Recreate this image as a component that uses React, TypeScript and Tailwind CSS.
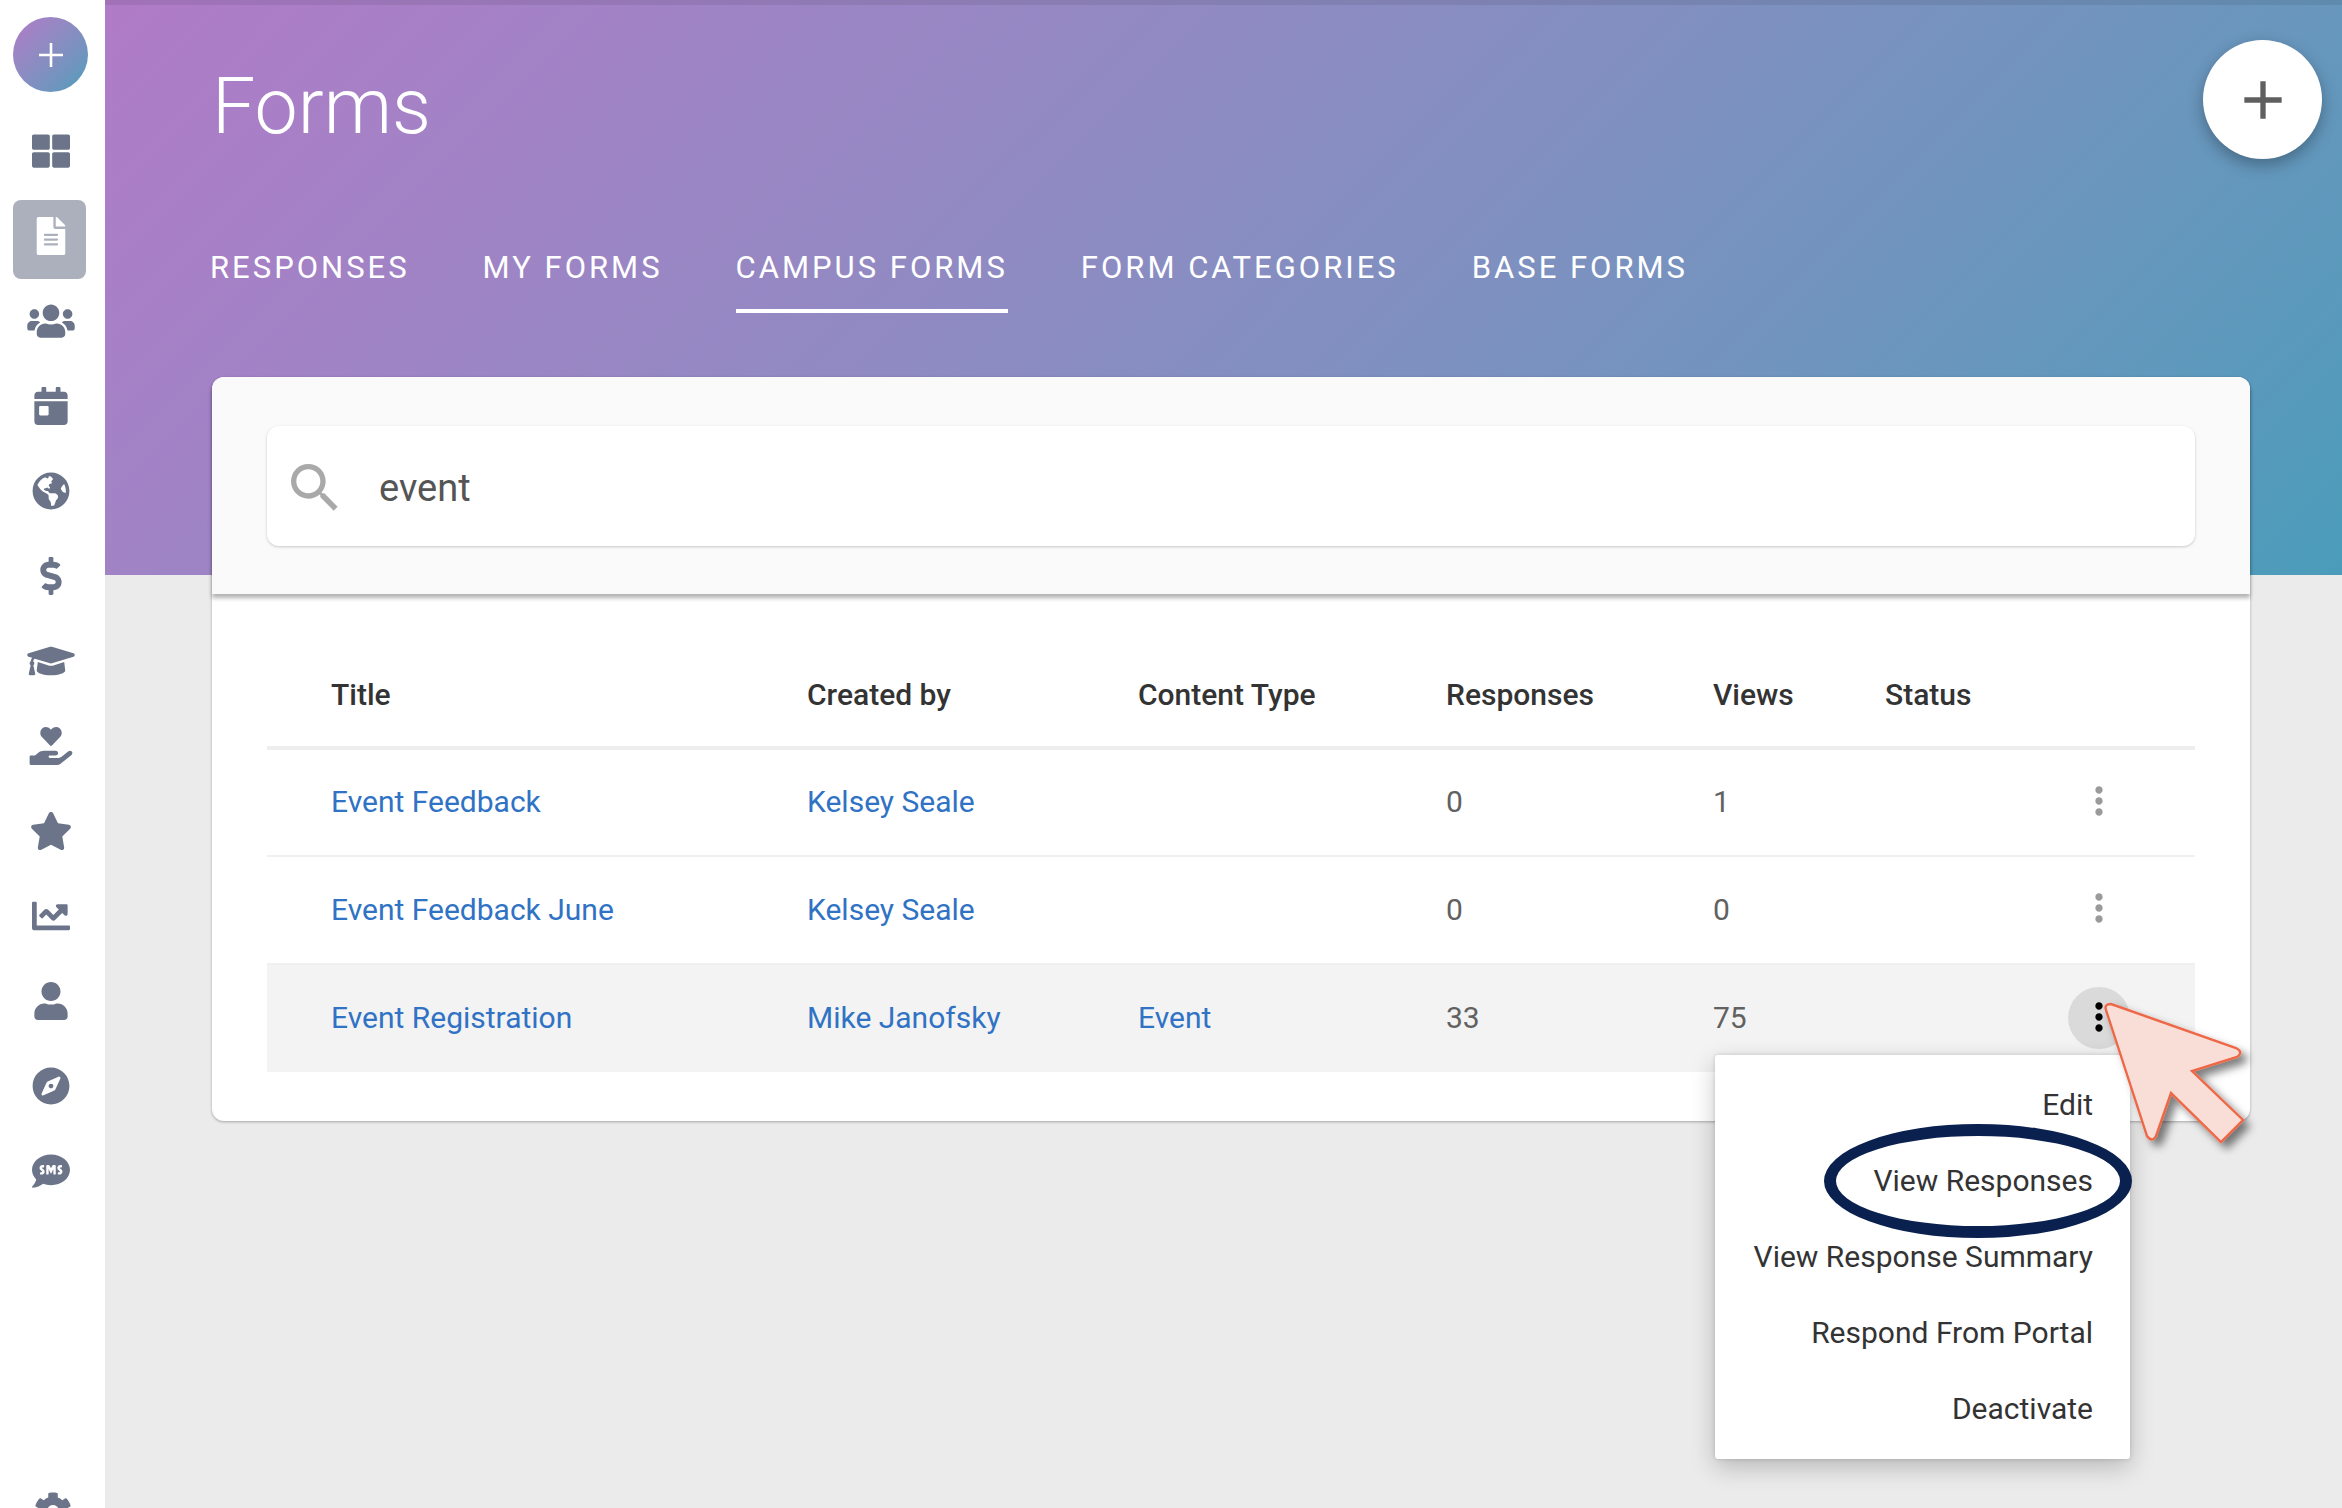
import React from "react";
import {
  FaThLarge,
  FaFileAlt,
  FaUsers,
  FaCalendarDay,
  FaGlobeAmericas,
  FaDollarSign,
  FaGraduationCap,
  FaHandHoldingHeart,
  FaStar,
  FaChartLine,
  FaUser,
  FaCompass,
  FaSms,
  FaCog,
} from "react-icons/fa";
import { MdAdd, MdMoreVert, MdSearch } from "react-icons/md";

const navItems = [
  { label: "Dashboard", Icon: FaThLarge },
  { label: "Forms", Icon: FaFileAlt, active: true },
  { label: "People", Icon: FaUsers },
  { label: "Events", Icon: FaCalendarDay },
  { label: "Website", Icon: FaGlobeAmericas },
  { label: "Finance", Icon: FaDollarSign },
  { label: "Academics", Icon: FaGraduationCap },
  { label: "Service", Icon: FaHandHoldingHeart },
  { label: "Favorites", Icon: FaStar },
  { label: "Reports", Icon: FaChartLine },
  { label: "Profile", Icon: FaUser },
  { label: "Explore", Icon: FaCompass },
  { label: "Messages", Icon: FaSms },
];

const tabs = ["Responses", "My Forms", "Campus Forms", "Form Categories", "Base Forms"];
const activeTab = "Campus Forms";

const rows = [
  { title: "Event Feedback", author: "Kelsey Seale", type: "", responses: 0, views: 1 },
  { title: "Event Feedback June", author: "Kelsey Seale", type: "", responses: 0, views: 0 },
  { title: "Event Registration", author: "Mike Janofsky", type: "Event", responses: 33, views: 75, open: true },
];

const menuItems = ["Edit", "View Responses", "View Response Summary", "Respond From Portal", "Deactivate"];

function Sidebar() {
  return (
    <aside className="sticky top-0 flex h-screen w-[105px] shrink-0 flex-col overflow-hidden bg-white px-[13px] pt-[17px] text-[#6b7489]">
      <button
        aria-label="Create"
        className="flex size-[75px] items-center justify-center rounded-full bg-linear-135 from-[#b07bc8] to-[#4a9cba]"
      >
        <svg viewBox="0 0 24 24" className="size-6" stroke="white" strokeWidth="2.6">
          <path d="M12 0v24M0 12h24" />
        </svg>
      </button>
      <nav aria-label="Main" className="mt-[23px] flex flex-col gap-[6px]">
        {navItems.map(({ label, Icon, active }) => (
          <a
            key={label}
            href="#"
            aria-label={label}
            className={
              active
                ? "flex h-[79px] w-[73px] justify-center rounded-lg bg-[#abb0bc] pt-[17px] pl-[3px] text-white"
                : "flex h-[79px] w-[73px] justify-center rounded-lg pt-[17px] pl-[3px]"
            }
          >
            <Icon className="h-[38px] w-12" />
          </a>
        ))}
      </nav>
      <a href="#" aria-label="Settings" className="mt-auto flex h-4 w-[79px] justify-center overflow-hidden">
        <FaCog className="size-[38px] shrink-0" />
      </a>
    </aside>
  );
}

function PointerArrow() {
  return (
    <svg
      aria-hidden="true"
      viewBox="0 0 160 160"
      className="pointer-events-none absolute top-[8px] left-[32px] z-20 size-[160px] max-w-none"
    >
      <defs>
        <filter id="arrow-shadow" x="-20%" y="-20%" width="150%" height="150%">
          <feDropShadow dx="6" dy="6" stdDeviation="4" floodColor="#000" floodOpacity="0.5" />
        </filter>
      </defs>
      <path
        d="M6 15 Q4 9 11 9 L136 53 Q144 57 137 62 L92 76 L143 125 L121 147 L71 98 L56 141 Q52 148 47 141 Z"
        fill="#f9ded8"
        stroke="#ee6847"
        strokeWidth="2.4"
        filter="url(#arrow-shadow)"
      />
    </svg>
  );
}

function RowMenu() {
  return (
    <div
      role="menu"
      className="absolute top-full right-0 z-10 mt-[6px] flex w-[415px] flex-col rounded-[3px] bg-white py-3 shadow-[0_8px_24px_rgba(0,0,0,0.22),0_0_4px_rgba(0,0,0,0.15)]"
    >
      {menuItems.map((item) => (
        <button
          key={item}
          role="menuitem"
          className="relative h-[76px] pr-[37px] text-right text-[30px] whitespace-nowrap text-[#333]"
        >
          {item}
          {item === "View Responses" && (
            <span className="pointer-events-none absolute -inset-y-[19px] -right-[2px] w-[308px] rounded-[50%] border-12 border-[#0a214f]" />
          )}
        </button>
      ))}
    </div>
  );
}

function FormsTable() {
  return (
    <table className="w-full table-fixed text-left text-[30px] text-[#616161]">
      <thead>
        <tr className="h-[110px] border-b-4 border-[#eee] text-[#333]">
          <th className="w-[540px] pt-1 pl-16 font-medium">Title</th>
          <th className="w-[331px] pt-1 font-medium">Created by</th>
          <th className="w-[308px] pt-1 font-medium">Content Type</th>
          <th className="w-[267px] pt-1 font-medium">Responses</th>
          <th className="w-[172px] pt-1 font-medium">Views</th>
          <th className="w-[183px] pt-1 font-medium">Status</th>
          <th className="w-[127px]" aria-label="Actions" />
        </tr>
      </thead>
      <tbody>
        {rows.map((row) => (
          <tr
            key={row.title}
            className={row.open ? "h-[108px] bg-[#f3f3f3]" : "h-[108px] border-b-2 border-[#f0f0f0]"}
          >
            <td className="pb-0.5 pl-16">
              <a href="#" className="text-[#3072c4]">{row.title}</a>
            </td>
            <td className="pb-0.5">
              <a href="#" className="text-[#3072c4]">{row.author}</a>
            </td>
            <td className="pb-0.5">{row.type && <a href="#" className="text-[#3072c4]">{row.type}</a>}</td>
            <td className="pb-0.5">{row.responses}</td>
            <td className="pb-0.5">{row.views}</td>
            <td />
            <td className="pb-0.5">
              <div className="relative size-[62px]">
                <button
                  aria-label={`Actions for ${row.title}`}
                  className={
                    row.open
                      ? "flex size-full items-center justify-center rounded-full bg-[#dadada] pb-0.5 text-black"
                      : "flex size-full items-center justify-center rounded-full pb-0.5 text-[#9a9a9a]"
                  }
                >
                  <MdMoreVert className="size-11" />
                </button>
                {row.open && (
                  <>
                    <RowMenu />
                    <PointerArrow />
                  </>
                )}
              </div>
            </td>
          </tr>
        ))}
      </tbody>
    </table>
  );
}

export default function App() {
  return (
    <div className="flex min-h-screen bg-[#ebebeb] font-[Roboto,sans-serif]">
      <Sidebar />
      <main className="min-w-0 flex-1">
        <header className="relative border-t-[5px] border-black/8 bg-linear-135 from-[#b07bc8] to-[#4a9cba] bg-origin-border pr-5 pb-[198px] pl-[105px] text-white">
          <h1 className="pt-[57px] pl-0.5 text-[77px] leading-[90px] font-light">Forms</h1>
          <button
            aria-label="Add form"
            className="absolute top-[35px] right-5 flex size-[119px] items-center justify-center rounded-full bg-white text-[#5f5f5f] shadow-[0_6px_16px_rgba(0,0,0,0.3)]"
          >
            <MdAdd className="size-16" />
          </button>
          <nav aria-label="Form sections" className="mt-[75px] mb-16 flex h-[86px] gap-[73px]">
            {tabs.map((tab) => (
              <a
                key={tab}
                href="#"
                className={
                  tab === activeTab
                    ? "flex h-[86px] items-center border-b-4 border-white text-[31px] tracking-[3px] uppercase"
                    : "flex h-[86px] items-center border-b-4 border-transparent text-[31px] tracking-[3px] uppercase"
                }
              >
                {tab}
              </a>
            ))}
          </nav>
        </header>
        <section className="relative -mt-[198px] mr-[92px] ml-[107px] rounded-xl bg-white pb-[49px] shadow-[0_1px_3px_rgba(0,0,0,0.3)]">
          <div className="rounded-t-xl bg-[#fafafa] px-[55px] pt-[49px] pb-12 shadow-[0_4px_4px_rgba(0,0,0,0.3)]">
            <label className="flex h-[120px] items-center gap-8 rounded-xl bg-white pt-1 pr-4 pl-4 shadow-[0_1px_3px_rgba(0,0,0,0.2)]">
              <MdSearch className="size-16 shrink-0 text-[#a9a9a9]" />
              <input
                type="text"
                aria-label="Search forms"
                defaultValue="event"
                className="min-w-0 flex-1 bg-transparent text-[38px] text-[#555] outline-none"
              />
            </label>
          </div>
          <div className="px-[55px] pt-[44px]">
            <FormsTable />
          </div>
        </section>
      </main>
    </div>
  );
}
